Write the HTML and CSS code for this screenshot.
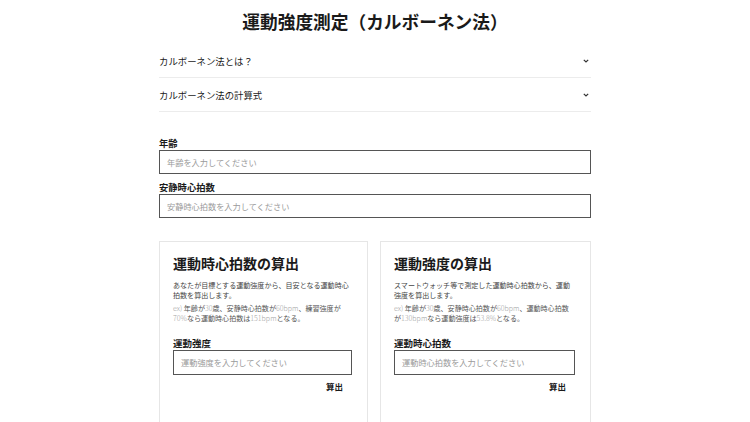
FILE: index.html
```html
<!DOCTYPE html>
<html lang="ja">
<head>
<meta charset="utf-8">
<link rel="stylesheet" href="styles.css">
</head>
<body>
<div class="page">
  <h1 class="title">運動強度測定（カルボーネン法）</h1>
  <div class="accordion">
    <div class="acc-row"><span>カルボーネン法とは？</span>
      <svg class="chev" width="6" height="4" viewBox="0 0 6 4"><path d="M0.8 0.8 L3 3 L5.2 0.8" fill="none" stroke="#333" stroke-width="1.2"/></svg>
    </div>
    <div class="acc-row"><span>カルボーネン法の計算式</span>
      <svg class="chev" width="6" height="4" viewBox="0 0 6 4"><path d="M0.8 0.8 L3 3 L5.2 0.8" fill="none" stroke="#333" stroke-width="1.2"/></svg>
    </div>
  </div>
  <div class="form">
    <label class="label">年齢</label>
    <div class="input"><span class="ph">年齢を入力してください</span></div>
    <label class="label">安静時心拍数</label>
    <div class="input"><span class="ph">安静時心拍数を入力してください</span></div>
  </div>
  <div class="cards">
    <div class="card">
      <h2 class="card-title">運動時心拍数の算出</h2>
      <p class="desc">あなたが目標とする運動強度から、目安となる運動時心拍数を算出します。</p>
      <p class="ex"><span class="lt">ex)</span> 年齢が<span class="lt">30</span>歳、安静時心拍数が<span class="lt">60bpm</span>、練習強度が<span class="lt">70%</span>なら運動時心拍数は<span class="lt">151bpm</span>となる。</p>
      <label class="label card-label">運動強度</label>
      <div class="input card-input"><span class="ph">運動強度を入力してください</span></div>
      <div class="btn-row"><span class="btn">算出</span></div>
    </div>
    <div class="card">
      <h2 class="card-title">運動強度の算出</h2>
      <p class="desc">スマートウォッチ等で測定した運動時心拍数から、運動強度を算出します。</p>
      <p class="ex"><span class="lt">ex)</span> 年齢が<span class="lt">30</span>歳、安静時心拍数が<span class="lt">60bpm</span>、運動時心拍数が<span class="lt">130bpm</span>なら運動強度は<span class="lt">53.8%</span>となる。</p>
      <label class="label card-label">運動時心拍数</label>
      <div class="input card-input"><span class="ph">運動時心拍数を入力してください</span></div>
      <div class="btn-row"><span class="btn">算出</span></div>
    </div>
  </div>
</div>
</body>
</html>
```
FILE: styles.css
```css
html, body {
  margin: 0;
  padding: 0;
  background: #fff;
}
body {
  font-family: "Noto Sans CJK JP", "Noto Sans", sans-serif;
  color: #1a1a1a;
}
.page {
  width: 432px;
  margin: 0 auto;
  padding-top: 10px;
}
.title {
  margin: 0;
  font-size: 17.7px;
  line-height: 22px;
  font-weight: 700;
  text-align: center;
}
.accordion {
  margin-top: 12px;
}
.acc-row {
  height: 33px;
  border-bottom: 1px solid #ececec;
  display: flex;
  align-items: center;
  justify-content: space-between;
  font-size: 9.4px;
  padding-right: 2px;
}
.form {
  margin-top: 24px;
  display: flex;
  flex-direction: column;
}
.label {
  display: block;
  font-size: 9.3px;
  font-weight: 700;
  line-height: 14px;
}
.input {
  height: 22px;
  border: 1px solid #555;
  display: flex;
  align-items: center;
  padding-left: 7px;
  margin-bottom: 6px;
}
.ph {
  font-size: 8.2px;
  color: #9a9a9a;
}
.cards {
  margin-top: 17px;
  display: grid;
  grid-template-columns: 209fr 211fr;
  gap: 12px;
}
.card {
  border: 1px solid #e6e6e6;
  border-bottom: none;
  padding: 11px 15px 40px 13px;
  min-height: 150px;
}
.card-title {
  margin: 0;
  font-size: 14px;
  line-height: 20px;
  font-weight: 700;
}
.desc {
  margin: 7px 0 0;
  font-size: 7.05px;
  line-height: 10px;
  color: #444;
}
.ex {
  margin: 3px 0 0;
  font-size: 7.05px;
  line-height: 10.3px;
  color: #555;
}
.lt {
  color: #a0a0a0;
  font-weight: 300;
}
.card-label {
  margin-top: 12px;
  font-size: 9.5px;
}
.card-input {
  height: 23px;
  margin-bottom: 0;
}
.btn-row {
  display: flex;
  justify-content: flex-end;
  margin-top: 4px;
  padding-right: 9px;
}
.btn {
  font-size: 8.5px;
  font-weight: 700;
  line-height: 14px;
}
```
